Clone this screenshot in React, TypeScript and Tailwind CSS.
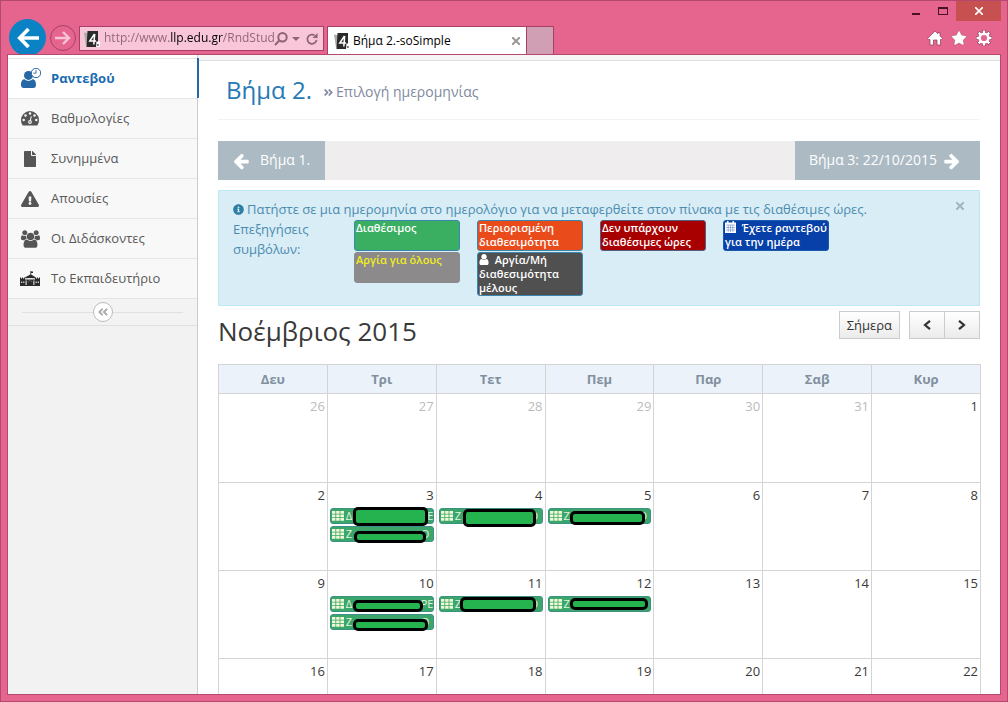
import type { ReactNode } from "react";
import { FaFile, FaExclamationTriangle, FaInfoCircle, FaStar, FaAngleDoubleRight, FaAngleDoubleLeft } from "react-icons/fa";

const USER_PATH =
  "M1536 1399q0 109-62.5 187t-150.5 78h-854q-88 0-150.5-78t-62.5-187q0-85 8.5-160.5t31.5-152 58.5-131 94-89 134.5-34.5q131 128 313 128t313-128q76 0 134.5 34.5t94 89 58.5 131 31.5 152 8.5 160.5zm-256-887q0 159-112.5 271.5t-271.5 112.5-271.5-112.5-112.5-271.5 112.5-271.5 271.5-112.5 271.5 112.5 112.5 271.5z";
const ARROW_PATH =
  "M1664 896v128q0 53-32.5 90.5t-84.5 37.5h-704l293 294q38 36 38 90t-38 90l-75 76q-37 37-90 37-52 0-91-37l-651-652q-37-37-37-90 0-52 37-91l651-650q38-38 91-38 52 0 90 38l75 74q38 38 38 91t-38 91l-293 293h704q52 0 84.5 37.5t32.5 90.5z";
const USERS_PATH =
  "M529 896q-162 5-265 128h-134q-82 0-138-40.5t-56-118.5q0-353 124-353 6 0 43.5 21t97.5 42.5 119 21.5q67 0 133-23-5 37-5 66 0 139 81 256zm1071 637q0 120-73 189.5t-194 69.5h-874q-121 0-194-69.5t-73-189.5q0-53 3.5-103.5t14-109 26.5-108.5 43-97.5 62-81 85.5-53.5 111.5-20q10 0 43 21.5t73 48 107 48 135 21.5 135-21.5 107-48 73-48 43-21.5q61 0 111.5 20t85.5 53.5 62 81 43 97.5 26.5 108.5 14 109 3.5 103.5zm-1024-1277q0 106-75 181t-181 75-181-75-75-181 75-181 181-75 181 75 75 181zm704 384q0 159-112.5 271.5t-271.5 112.5-271.5-112.5-112.5-271.5 112.5-271.5 271.5-112.5 271.5 112.5 112.5 271.5zm576 225q0 78-56 118.5t-138 40.5h-134q-103-123-265-128 81-117 81-256 0-29-5-66 66 23 133 23 59 0 119-21.5t97.5-42.5 43.5-21q124 0 124 353zm-128-609q0 106-75 181t-181 75-181-75-75-181 75-181 181-75 181 75 75 181z";

function Arrow({ className }: { className: string }) {
  return (
    <svg viewBox="0 0 1792 1792" className={className} fill="currentColor" aria-hidden="true">
      <path d={ARROW_PATH} />
    </svg>
  );
}

function UserIcon({ className }: { className: string }) {
  return (
    <svg viewBox="256 128 1280 1536" className={className} fill="currentColor" aria-hidden="true">
      <path d={USER_PATH} />
    </svg>
  );
}

function UserClockIcon() {
  return (
    <svg viewBox="0 0 20 20" className="size-5" aria-hidden="true">
      <circle cx="7.5" cy="7.4" r="4.5" fill="#2667a5" />
      <path d="M0 17c0-3.500 1-5.800 3.600-5.800 2.400 2 5.400 2 7.800 0 2.600 0 3.600 2.300 3.600 5.800 0 2-1 3-2.800 3H2.800C1 20 0 19 0 17z" fill="#2667a5" />
      <circle cx="15" cy="5" r="4.700" fill="#fff" stroke="#2667a5" strokeWidth="1" />
      <path d="M15 2v3.200h-2.600" fill="none" stroke="#2667a5" strokeWidth="0.900" />
    </svg>
  );
}

function GaugeIcon() {
  return (
    <svg viewBox="0 0 18 15" className="w-[18px] h-[15px]" aria-hidden="true">
      <path d="M9 0a9 9 0 0 1 9 9c0 1.900-.5 3.500-1.400 5-.2.400-.6.600-1 .6H2.400c-.4 0-.8-.2-1-.6A9.300 9.300 0 0 1 0 9a9 9 0 0 1 9-9z" fill="#555" />
      <g fill="#f8f8f8">
        <circle cx="2.700" cy="9" r="1.250" />
        <circle cx="4.500" cy="4.500" r="1.250" />
        <circle cx="9" cy="2.600" r="1.250" />
        <circle cx="13.500" cy="4.500" r="1.250" />
        <circle cx="15.300" cy="9" r="1.250" />
        <circle cx="9" cy="11" r="1.900" />
        <path d="M8.500 10.800l1.300-5.600 1 .3-1.400 5.500z" />
      </g>
      <circle cx="9" cy="11" r="0.800" fill="#555" />
    </svg>
  );
}

function UsersIcon() {
  return (
    <svg viewBox="-64 0 1920 1792" className="w-[19px] h-[18px]" fill="#555" aria-hidden="true">
      <path d={USERS_PATH} />
    </svg>
  );
}

function SchoolIcon() {
  return (
    <svg viewBox="0 0 20 15" className="w-5 h-[15px]" fill="#2b2b2b" aria-hidden="true">
      <path d="M10.400 0h.8v.5h1.800v1.400h-1.800v1.600l4.300 2.700v1H5.200v-1l5.200-2.700z" />
      <path d="M0 6.500h1v1h1v-1h1v1h1v-1h1V9H0zM20 6.500h-1v1h-1v-1h-1v1h-1v-1h-1V9h5z" />
      <path d="M0 9h5v6H0zM15 9h5v6h-5zM5 8.500h10V15h-3v-3.500a2 2 0 0 0-4 0V15H5z" />
      <path d="M8 15v-3.500a2 2 0 0 1 4 0V15z" />
      <path d="M1.200 10.500h1v1.500h-1zM3.300 10.500h1v1.500h-1zM15.700 10.500h1v1.500h-1zM17.800 10.500h1v1.500h-1zM5.600 9.500h1V14h-1zM13.400 9.500h1V14h-1zM7.500 7h5v.7h-5z" fill="#f8f8f8" />
    </svg>
  );
}

function Favicon() {
  return (
    <svg viewBox="0 0 16 16" className="size-4 shrink-0" aria-hidden="true">
      <path d="M0 1.500l5 1v11l-3 1z" fill="#aaa" />
      <path d="M3.500 0H14v10.500L12 16H2.500z" fill="#2b2b2b" />
      <path d="M10.500 3L5.800 10H12M10.700 3l-.9 10.500" fill="none" stroke="#fff" strokeWidth="1.500" />
      <path d="M12.300 10.500H16V16h-3.700z" fill="#fff" />
      <path d="M13 13h1.800v2H13z" fill="#777" />
    </svg>
  );
}

function GridIcon() {
  return (
    <svg viewBox="0 0 12 10" className="w-3 h-2.5 shrink-0" fill="#f1f9d5" aria-hidden="true">
      <path d="M0 0h3.400v2.800H0zM4.200 0h3.400v2.800H4.200zM8.400 0H12v2.800H8.400zM0 3.500h3.400v2.800H0zM4.200 3.500h3.400v2.800H4.200zM8.400 3.500H12v2.800H8.400zM0 7h3.400v2.800H0zM4.200 7h3.400v2.800H4.200zM8.400 7H12v2.800H8.400z" />
    </svg>
  );
}

function CalendarIcon() {
  return (
    <svg viewBox="0 0 11 12" className="inline-block w-[11px] h-3 align-[-1px]" fill="#fff" aria-hidden="true">
      <path d="M2 0h1.500v1.500h4V0H9v1.500h2V12H0V1.500h2z" />
      <path d="M1 4h9M1 6.500h9M1 9h9M3.200 4v7M5.500 4v7M7.800 4v7" stroke="#0640a8" strokeWidth="0.350" />
    </svg>
  );
}

function BrowserChrome() {
  return (
    <header className="flex h-[53px] shrink-0 justify-between">
      <div className="flex min-w-0 items-end pl-0.5">
        <div className="flex h-[35px] items-start overflow-hidden">
          <button aria-label="Πίσω" className="flex size-[37px] shrink-0 items-center justify-center rounded-full bg-[#0a82c3] text-white">
            <svg viewBox="0 0 22 20" className="w-[22px] h-5" fill="none" stroke="currentColor" strokeWidth="3.600" aria-hidden="true">
              <path d="M22 10H3M11.500 1L2.700 10l8.800 9" />
            </svg>
          </button>
          <button aria-label="Εμπρός" className="ml-1 mt-1.5 flex size-[26px] shrink-0 items-center justify-center rounded-full border border-[#a83f68] text-[#f9c3d7]">
            <svg viewBox="0 0 16 14" className="w-4 h-3.5" fill="none" stroke="currentColor" strokeWidth="2.400" aria-hidden="true">
              <path d="M0 7h14M8 1l6 6-6 6" />
            </svg>
          </button>
        </div>
        <div className="mb-[3px] ml-[3px] flex h-[25px] w-[245px] items-center border border-[#a83f68] bg-[#f9c6d9] pl-1 pr-[5px]">
          <Favicon />
          <input
            aria-label="Διεύθυνση"
            defaultValue="http://www.llp.edu.gr/RndStud"
            className="ml-1 min-w-0 flex-1 bg-[linear-gradient(to_right,#8d6474_65px,#000_65px,#000_119px,#8d6474_119px)] bg-clip-text pb-0.5 text-xs text-transparent outline-none"
          />
          <button aria-label="Αναζήτηση">
            <svg viewBox="0 0 14 14" className="size-3.5" fill="none" stroke="#8d6474" strokeWidth="2" aria-hidden="true">
              <circle cx="8.500" cy="5.200" r="4.200" />
              <path d="M5.500 8.300L1 13" />
            </svg>
          </button>
          <svg viewBox="0 0 8 4" className="ml-1 w-2 h-1" fill="#8d6474" aria-hidden="true">
            <path d="M0 0h8L4 4z" />
          </svg>
          <button aria-label="Ανανέωση" className="ml-1.5">
            <svg viewBox="0 0 13 13" className="size-3" fill="none" stroke="#8d6474" strokeWidth="1.900" aria-hidden="true">
              <path d="M11.500 7.500a5 5 0 1 1-2.200-5" />
              <path d="M7 5.500h5.500V0z" fill="#8d6474" stroke="none" />
            </svg>
          </button>
        </div>
        <div className="ml-[3px] flex h-7 w-[200px] items-center border border-b-0 border-[#a83f68] bg-white pl-1.5 pr-1.5 text-xs text-black">
          <Favicon />
          <span className="ml-[3px] flex-1">Βήμα 2.-soSimple</span>
          <button aria-label="Κλείσιμο καρτέλας">
            <svg viewBox="0 0 8 8" className="size-2" stroke="#999" strokeWidth="2" aria-hidden="true">
              <path d="M0 0l8 8M8 0L0 8" />
            </svg>
          </button>
        </div>
        <button aria-label="Νέα καρτέλα" className="h-7 w-[27px] border border-b-0 border-l-0 border-[#a83f68] bg-[#d09fb3]" />
      </div>
      <div className="flex flex-col items-end">
        <div className="flex h-5 items-center">
          <button aria-label="Ελαχιστοποίηση" className="flex h-5 w-7 items-center justify-center">
            <span className="mt-1.5 h-0.5 w-2 bg-[#4a1028]" />
          </button>
          <button aria-label="Μεγιστοποίηση" className="flex h-5 w-[26px] items-center justify-center">
            <span className="h-2 w-2.5 border border-t-2 border-[#4a1028]" />
          </button>
          <button aria-label="Κλείσιμο" className="flex h-5 w-[45px] items-center justify-center bg-[#c75050]">
            <svg viewBox="0 0 8 8" className="size-2" stroke="#fff" strokeWidth="1.700" aria-hidden="true">
              <path d="M0 0l8 8M8 0L0 8" />
            </svg>
          </button>
        </div>
        <div className="mr-2 mt-2 flex items-center gap-2 text-white">
          <button aria-label="Αρχική">
            <svg viewBox="0 0 16 16" className="size-4" fill="#fff" stroke="#8c3757" strokeWidth="0.700" aria-hidden="true">
              <path d="M8 1l3 2.800V2.500h2v3.300L15.500 8.500 14.500 9.500H13.500V15H10V10H6.500v5H3V9.500H1.500L.7 8.500z" />
            </svg>
          </button>
          <button aria-label="Αγαπημένα">
            <FaStar className="size-4 stroke-[#8c3757] stroke-[14]" />
          </button>
          <button aria-label="Εργαλεία" className="flex">
            <svg viewBox="0 0 18 18" className="size-[18px]" aria-hidden="true">
              <g stroke="#8c3757" strokeWidth="3.600">
                <path d="M9 1v16M1 9h16M3.300 3.300l11.400 11.400M14.700 3.300L3.300 14.700" />
              </g>
              <g stroke="#fff" strokeWidth="2.400">
                <path d="M9 1.500v15M1.500 9h15M3.700 3.700l10.600 10.600M14.300 3.700L3.700 14.300" />
              </g>
              <circle cx="9" cy="9" r="4.300" fill="#e5658f" stroke="#fff" strokeWidth="2.400" />
            </svg>
          </button>
        </div>
      </div>
    </header>
  );
}

const menu: { label: string; icon: ReactNode; active?: boolean }[] = [
  { label: "Ραντεβού", icon: <UserClockIcon />, active: true },
  { label: "Βαθμολογίες", icon: <GaugeIcon /> },
  { label: "Συνημμένα", icon: <FaFile className="size-4 text-[#555]" /> },
  { label: "Απουσίες", icon: <FaExclamationTriangle className="size-[18px] text-[#555]" /> },
  { label: "Οι Διδάσκοντες", icon: <UsersIcon /> },
  { label: "Το Εκπαιδευτήριο", icon: <SchoolIcon /> },
];

function Sidebar() {
  return (
    <nav className="w-[190px] shrink-0 border-r border-[#ccc] bg-[#f2f2f2]">
      <div className="h-[3px] bg-white" />
      <ul className="border-t border-[#e5e5e5]">
        {menu.map((m) => (
          <li key={m.label} className="relative border-b border-[#e5e5e5]">
            <a
              href="#"
              className={
                m.active
                  ? "flex h-[39px] items-center bg-white pb-0.5 pl-[13px] font-bold text-[#1a6cb0]"
                  : "flex h-[39px] items-center bg-[#f8f8f8] pb-0.5 pl-3 text-[#585858]"
              }
            >
              <span className={m.active ? "flex w-5 justify-center" : "flex w-5 justify-center pt-0.5"}>{m.icon}</span>
              <span className={m.active ? "ml-2.5" : "ml-[11px]"}>{m.label}</span>
            </a>
            {m.active && <span className="absolute -right-0.5 -top-px h-10 w-0.5 bg-[#2667a5]" />}
          </li>
        ))}
      </ul>
      <div className="flex h-[27px] items-center border-b border-[#e0e0e0] bg-[#f3f3f3] px-3.5">
        <span className="h-px flex-1 bg-[#e0e0e0]" />
        <button aria-label="Σύμπτυξη μενού" className="flex size-5 items-center justify-center rounded-full border border-[#bbb] bg-white text-[#aaa]">
          <FaAngleDoubleLeft className="size-3" />
        </button>
        <span className="h-px flex-1 bg-[#e0e0e0]" />
      </div>
    </nav>
  );
}

function Legend() {
  const chip = "min-h-[31px] rounded-[3px] border px-px text-[11px] leading-[14px] font-semibold text-white";
  return (
    <div className="flex items-start">
      <p className="w-[121px] shrink-0 pr-8">Επεξηγήσεις συμβόλων:</p>
      <div className="grid grid-cols-[repeat(4,106px)] items-start gap-x-[17px] gap-y-px pt-px">
        <div className={`${chip} border-[#3a87ad] bg-[#3aaf62]`}>Διαθέσιμος</div>
        <div className={`${chip} border-[#3a87ad] bg-[#e94b1b]`}>Περιορισμένη διαθεσιμότητα</div>
        <div className={`${chip} border-[#54617d] bg-[#a80000]`}>Δεν υπάρχουν διαθέσιμες ώρες</div>
        <div className={`${chip} border-[#1a5aab] bg-[#0640a8]`}>
          <CalendarIcon />&nbsp; Έχετε ραντεβού για την ημέρα
        </div>
        <div className="min-h-[31px] rounded-[3px] border border-[#8c8a8a] bg-[#8c8a8a] px-px text-[11px] leading-[14px] font-semibold text-[#f0ee20]">
          Αργία για όλους
        </div>
        <div className={`${chip} border-[#3a87ad] bg-[#505050]`}>
          <UserIcon className="inline-block w-2.5 h-[11px] align-[-1px]" />&nbsp; Αργία/Μή διαθεσιμότητα μέλους
        </div>
      </div>
    </div>
  );
}

type Ev = { start: string; end: string; mask: string };
const events: Record<string, Ev[]> = {
  "3": [
    { start: "Δ", end: "ΡΕ", mask: "left-[22px] -top-0.5 w-[75px] h-[19px]" },
    { start: "Ζ", end: "Ο", mask: "left-[23px] top-1 w-[72px] h-3" },
  ],
  "4": [{ start: "Ζ", end: "Ο", mask: "left-[23px] top-0 w-[73px] h-[18px]" }],
  "5": [{ start: "Ζ", end: "Ο", mask: "left-[21px] top-0.5 w-[75px] h-3.5" }],
  "10": [
    { start: "Δ", end: "ΡΕ", mask: "left-[22px] top-[3px] w-[70px] h-3" },
    { start: "Ζ", end: "Ο", mask: "left-[22px] top-1 w-[75px] h-3" },
  ],
  "11": [{ start: "Ζ", end: "Ο", mask: "left-5 top-0 w-[76px] h-[15px]" }],
  "12": [{ start: "Ζ", end: "", mask: "left-[21px] top-px w-[78px] h-3" }],
};

function EventItem({ ev }: { ev: Ev }) {
  return (
    <a href="#" className="relative block rounded-[3px] border border-[#3d9183] bg-[#3aa66c] text-[11px] leading-[14px] text-[#e4f5dc]">
      <span className="flex items-center overflow-hidden pl-px">
        <GridIcon />
        <span className="ml-0.5 flex-1">{ev.start}</span>
        <span className="w-3 shrink-0 whitespace-nowrap">{ev.end}</span>
      </span>
      <span className={`absolute rounded-[5px] border-3 border-black bg-[#25b34f] ${ev.mask}`} />
    </a>
  );
}

const weekdays = ["Δευ", "Τρι", "Τετ", "Πεμ", "Παρ", "Σαβ", "Κυρ"];
const weeks = [
  ["26", "27", "28", "29", "30", "31", "1"],
  ["2", "3", "4", "5", "6", "7", "8"],
  ["9", "10", "11", "12", "13", "14", "15"],
  ["16", "17", "18", "19", "20", "21", "22"],
];

function Calendar() {
  return (
    <table className="mt-[21px] w-[calc(100%+1px)] table-fixed border-collapse">
      <thead>
        <tr className="h-[29px]">
          {weekdays.map((d) => (
            <th key={d} className="border border-[#d4d4d4] bg-[#ecf2f9] p-0 font-bold text-[#8090a0]">
              {d}
            </th>
          ))}
        </tr>
      </thead>
      <tbody>
        {weeks.map((w, i) => (
          <tr key={w[0]} className={i === 0 ? "h-[89px]" : "h-[88px]"}>
            {w.map((d, j) => (
              <td key={d} className="border border-[#d4d4d4] px-0.5 pb-0 pt-0.5 align-top">
                <div className={i === 0 && j < 6 ? "text-right text-[#bbb]" : "text-right text-[#393939]"}>{d}</div>
                {i > 0 && events[d] && (
                  <div className="flex flex-col gap-0.5 pt-[3px]">
                    {events[d].map((ev, k) => (
                      <EventItem key={k} ev={ev} />
                    ))}
                  </div>
                )}
              </td>
            ))}
          </tr>
        ))}
      </tbody>
    </table>
  );
}

function Main() {
  return (
    <main className="min-w-0 flex-1 bg-white">
      <div className="h-1.5 border-b border-[#ddd] bg-[#f5f5f5]" />
      <div className="px-5">
        <h1 className="flex h-[59px] items-center border-b border-[#f3f3f3] pl-2 text-2xl text-[#2679b5]">
          Βήμα 2.
          <small className="ml-[11px] mt-1 flex items-center text-sm text-[#8089a0]">
            <FaAngleDoubleRight className="mr-0.5 size-[11px]" />
            Επιλογή ημερομηνίας
          </small>
        </h1>
        <div className="mt-[21px] flex h-[39px] justify-between bg-[#efeded] text-sm text-white">
          <button className="flex items-center bg-[#abbac3] pb-0.5 pl-3.5 pr-[15px]">
            <Arrow className="mr-2.5 mt-0.5 size-[18px]" />
            Βήμα 1.
          </button>
          <button className="flex items-center bg-[#abbac3] pb-0.5 pl-3.5 pr-[19px]">
            Βήμα 3: 22/10/2015
            <Arrow className="ml-1.5 mt-0.5 size-[18px] -scale-x-100" />
          </button>
        </div>
        <section className="mt-2.5 border border-[#bce8f1] bg-[#d9edf7] pb-[9px] pl-3.5 pr-[15px] pt-2 leading-5 text-[#4a8cae]">
          <div className="flex items-start">
            <p className="flex flex-1 items-center">
              <FaInfoCircle className="mr-[3px] size-[11px] text-[#2f7fa5]" />
              Πατήστε σε μια ημερομηνία στο ημερολόγιο για να μεταφερθείτε στον πίνακα με τις διαθέσιμες ώρες.
            </p>
            <button aria-label="Κλείσιμο μηνύματος" className="mt-[3px] flex">
              <svg viewBox="0 0 8 8" className="size-2" stroke="#a5b4bb" strokeWidth="2" aria-hidden="true">
                <path d="M0 0l8 8M8 0L0 8" />
              </svg>
            </button>
          </div>
          <Legend />
        </section>
        <div className="mt-[5px] flex h-8 items-start justify-between">
          <h2 className="text-[26px] leading-10 text-[#393939]">Νοέμβριος 2015</h2>
          <div className="flex text-[#333]">
            <button className="h-7 border border-[#ccc] bg-linear-to-b from-white to-[#ebebeb] px-[7px]">Σήμερα</button>
            <button aria-label="Προηγούμενος" className="ml-[9px] flex h-7 w-9 items-center justify-center border border-[#ccc] bg-linear-to-b from-white to-[#ebebeb]">
              <svg viewBox="0 0 8 10" className="w-2 h-2.5" fill="none" stroke="currentColor" strokeWidth="2.200" aria-hidden="true">
                <path d="M7 .8L2 5l5 4.200" />
              </svg>
            </button>
            <button aria-label="Επόμενος" className="flex h-7 w-[35px] items-center justify-center border border-l-0 border-[#ccc] bg-linear-to-b from-white to-[#ebebeb]">
              <svg viewBox="0 0 8 10" className="w-2 h-2.5" fill="none" stroke="currentColor" strokeWidth="2.200" aria-hidden="true">
                <path d="M1 .8L6 5 1 9.200" />
              </svg>
            </button>
          </div>
        </div>
        <Calendar />
      </div>
    </main>
  );
}

export default function App() {
  return (
    <div className="flex h-screen flex-col border border-[#b5486f] bg-[#e5658f] px-1.5 pb-1.5 font-['Open_Sans','Noto_Sans',sans-serif] text-[13px] leading-5">
      <BrowserChrome />
      <div className="flex min-h-0 flex-1 overflow-hidden border border-[#b5486f]">
        <Sidebar />
        <Main />
      </div>
    </div>
  );
}
